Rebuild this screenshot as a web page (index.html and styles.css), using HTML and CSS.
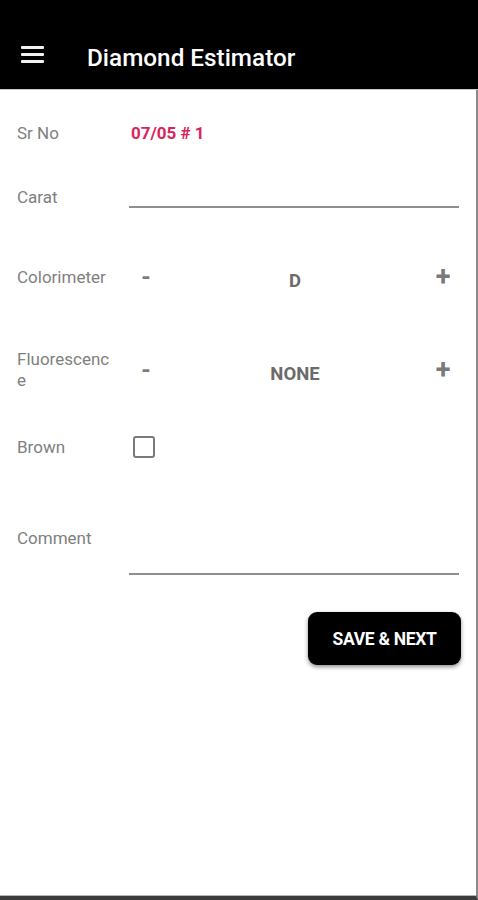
FILE: index.html
```html
<!DOCTYPE html>
<html lang="en">
<head>
<meta charset="utf-8">
<title>Diamond Estimator</title>
<link rel="stylesheet" href="styles.css">
</head>
<body>
<div class="app">
  <header class="toolbar">
    <span class="menu" aria-label="menu">
      <span class="bar"></span><span class="bar"></span><span class="bar"></span>
    </span>
    <h1 class="title">Diamond Estimator</h1>
  </header>
  <main class="form">
    <div class="row row-srno">
      <span class="label">Sr No</span>
      <span class="srno">07/05 # 1</span>
    </div>
    <div class="row row-carat">
      <span class="label">Carat</span>
      <span class="field field-carat"></span>
    </div>
    <div class="row row-color">
      <span class="label">Colorimeter</span>
      <div class="stepper">
        <span class="step minus">-</span>
        <span class="value">D</span>
        <span class="step plus">+</span>
      </div>
    </div>
    <div class="row row-fluor">
      <span class="label">Fluorescenc<br>e</span>
      <div class="stepper">
        <span class="step minus">-</span>
        <span class="value">NONE</span>
        <span class="step plus">+</span>
      </div>
    </div>
    <div class="row row-brown">
      <span class="label">Brown</span>
      <span class="checkbox"></span>
    </div>
    <div class="row row-comment">
      <span class="label">Comment</span>
      <span class="field field-comment"></span>
    </div>
    <div class="actions">
      <button class="btn">SAVE &amp; NEXT</button>
    </div>
  </main>
</div>
</body>
</html>
```
FILE: styles.css
```css
* { box-sizing: border-box; }
html, body { margin: 0; padding: 0; background: #fff; }
body { font-family: Roboto, "Noto Sans", "Liberation Sans", sans-serif; }

.app { width: 478px; height: 900px; display: flex; flex-direction: column; }

.toolbar {
  height: 90px;
  background: #000;
  border-bottom: 1px solid #c9c9c9;
  display: flex;
  align-items: center;
  padding-top: 22px;
  padding-left: 21px;
  flex: none;
}
.menu { display: flex; flex-direction: column; gap: 4px; width: 23px; margin-top: -2px; }
.bar { display: block; height: 3px; background: #f2f2f2; border-radius: 1px; }
.title {
  margin: 4px 0 0 43px;
  color: #fff;
  font-size: 24.3px;
  font-weight: 500;
  letter-spacing: 0;
}

.form {
  flex: 1;
  border-right: 2px solid #8a8a8a;
  border-bottom: 4px solid #3c3c3c;
  box-shadow: inset 0 -1px 0 #b5b5b5;
  padding: 23px 17px 0 17px;
  display: flex;
  flex-direction: column;
}

.row { display: flex; align-items: center; height: 40px; }
.label {
  width: 112px;
  flex: none;
  color: #808080;
  font-size: 17px;
  line-height: 21px;
}
.srno { color: #d8245c; font-weight: 700; font-size: 17px; margin-left: 2px; }

.row-carat { margin-top: 24px; }
.field { flex: 1; border-bottom: 2px solid #8e8e8e; }
.field-carat { align-self: flex-start; height: 31px; }

.row-color { margin-top: 40px; }
.row-fluor { margin-top: 53px; }
.stepper { flex: 1; display: flex; align-items: center; }
.step {
  flex: none;
  color: #7a7a7a;
  font-weight: 700;
  font-size: 24px;
  line-height: 24px;
  text-align: center;
}
.minus { width: 34px; }
.plus { width: 32px; font-size: 27px; }
.value {
  flex: 1;
  text-align: center;
  color: #6b6b6b;
  font-weight: 700;
  font-size: 18.5px;
  padding-top: 8px;
}

.row-brown { margin-top: 37px; }
.checkbox {
  width: 22px; height: 22px;
  margin-left: 4px;
  border: 2px solid #7a7a7a;
  border-radius: 3px;
}

.row-comment { margin-top: 51px; height: 58px; align-items: flex-start; }
.row-comment .label { margin-top: 10px; }
.field-comment { height: 57px; }

.actions { display: flex; justify-content: flex-end; margin-top: 36px; margin-right: -2px; }
.btn {
  width: 153px; height: 53px;
  background: #000;
  color: #fff;
  border: none;
  border-radius: 9px;
  box-shadow: 0 2px 4px rgba(0,0,0,0.45);
  font-family: Roboto, "Noto Sans", "Liberation Sans", sans-serif;
  font-weight: 700;
  font-size: 17.5px;
  letter-spacing: -0.3px;
}
```
